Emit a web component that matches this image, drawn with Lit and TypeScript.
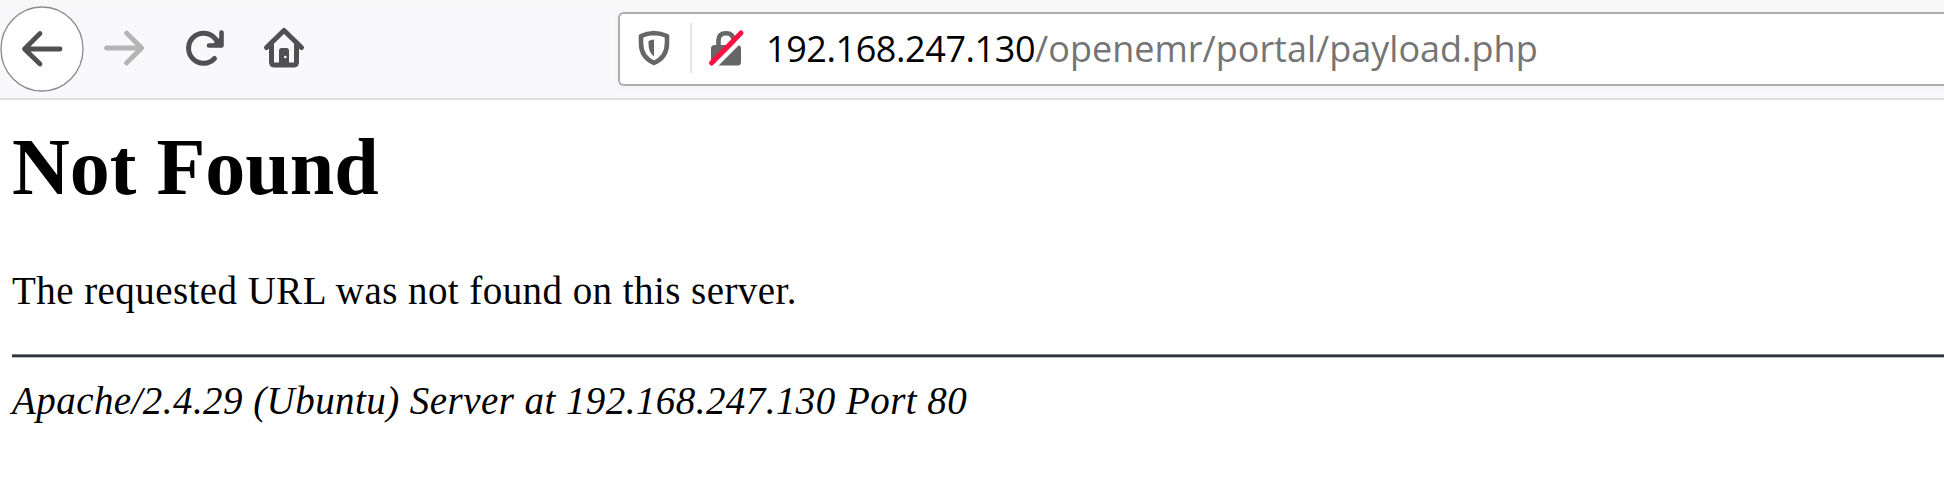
import { LitElement, html, css } from "lit";
import { customElement } from "lit/decorators.js";

@customElement("browser-toolbar")
class BrowserToolbar extends LitElement {
  static styles = css`
    :host { display: block; }
    .bar { box-sizing: border-box; height: 100px; display: flex; background: linear-gradient(#f8f8f8, #f8f8fa 12px, #f9f9fb); border-bottom: 2px solid #dfdfe0; overflow: hidden; }
    .nav { width: 618px; flex: none; height: 98px; display: block; }
    .field { box-sizing: border-box; flex: 1; margin-top: 12px; height: 74px; border: 2px solid #adadad; border-right: 0; border-radius: 6px 0 0 6px; background: #fff; display: flex; align-items: center; box-shadow: 0 2px 8px #00000008; }
    .marks { width: 147px; height: 70px; flex: none; display: block; }
    .url { font: 36px/50px "Open Sans", "Noto Sans", sans-serif; white-space: pre; color: #747476; margin-left: -1px; }
    .host { color: #000; letter-spacing: -0.42px; }
    .path { letter-spacing: 0; }
  `;
  render() {
    return html`<div class="bar">
      <svg class="nav" viewBox="0 0 618 98" fill="none" stroke-linecap="round" stroke-linejoin="round">
        <ellipse cx="42" cy="49" rx="41" ry="42" fill="#fff" stroke="#8a8a8a" stroke-width="1.3"/>
        <path d="M60 49H25M40 33.5 24.5 49 40 64" stroke="#505052" stroke-width="4.8"/>
        <path d="M106.5 48H141M126.5 33 141.7 48 126.5 63" stroke="#b5b5b6" stroke-width="4.8"/>
        <path d="M214.5 58.5A15 15 0 1 1 215 38.5L220 44" stroke="#505052" stroke-width="5"/>
        <path d="M221.5 32.5V45.5H209" stroke="#505052" stroke-width="4.6"/>
        <path d="M221 38v7h-8z" fill="#505052" stroke="#505052" stroke-width="2"/>
        <path d="M266.5 47.5 284 30.5 301.5 47.5M271.5 45V62Q271.5 65 274.5 65H293.5Q296.5 65 296.5 62V45" stroke="#505052" stroke-width="5"/>
        <path d="M279 65V50.5Q279 48 281.5 48H286.5Q289 48 289 50.5V65Z" fill="#505052"/>
        <circle cx="285.3" cy="57" r="1.3" fill="#fff"/>
      </svg>
      <div class="field">
        <svg class="marks" viewBox="620 14 147 70" fill="none" stroke-linecap="round" stroke-linejoin="round">
          <path d="M654 33Q661 33.2 667 36V43C667 53 662 59.5 654 63C646 59.5 641 53 641 43V36Q647 33.2 654 33Z" stroke="#666" stroke-width="4.6"/>
          <path d="M654 39.5V56.5Q648.5 52.5 648.5 44V41Q651 39.5 654 39.5Z" fill="#666"/>
          <path d="M691 23V73" stroke="#dedede" stroke-width="1.5" stroke-linecap="butt"/>
          <path d="M718.5 47V40.5Q718.5 33.3 726 33.3T733.5 40.5V47" stroke="#666" stroke-width="4.6" stroke-linecap="butt"/>
          <rect x="711" y="45" width="30" height="20.5" rx="3.5" fill="#666"/>
          <path d="M713 68 746 35" stroke="#fff" stroke-width="4.5" stroke-linecap="butt"/>
          <path d="M711.5 63 741 33" stroke="#ff0f42" stroke-width="5"/>
        </svg>
        <div class="url"><span class="host">192.168.247.130</span><span class="path">/openemr/portal/payload.php</span></div>
      </div>
    </div>`;
  }
}

@customElement("app-root")
class AppRoot extends LitElement {
  static styles = css`
    :host { display: block; height: 480px; overflow: hidden; background: #fff; color: #000; font-family: "Liberation Serif", serif; }
    .page { padding-left: 12px; white-space: nowrap; }
    .title { margin: 0; padding-top: 21px; font-size: 80px; line-height: 92px; font-weight: bold; }
    .message { margin: 0; padding-top: 56px; font-size: 39px; line-height: 44px; letter-spacing: 0.44px; }
    .rule { margin-top: 41px; height: 2px; background: #303638; border-top: 1px solid #808484; border-bottom: 1px solid #bcbebe; }
    .server { display: block; margin-top: 21px; font-size: 39px; line-height: 44px; font-style: italic; letter-spacing: 0.44px; }
  `;
  render() {
    return html`<browser-toolbar></browser-toolbar>
      <main class="page">
        <h1 class="title">Not Found</h1>
        <p class="message">The requested URL was not found on this server.</p>
        <div class="rule"></div>
        <address class="server">Apache/2.4.29 (Ubuntu) Server at 192.168.247.130 Port 80</address>
      </main>`;
  }
}
